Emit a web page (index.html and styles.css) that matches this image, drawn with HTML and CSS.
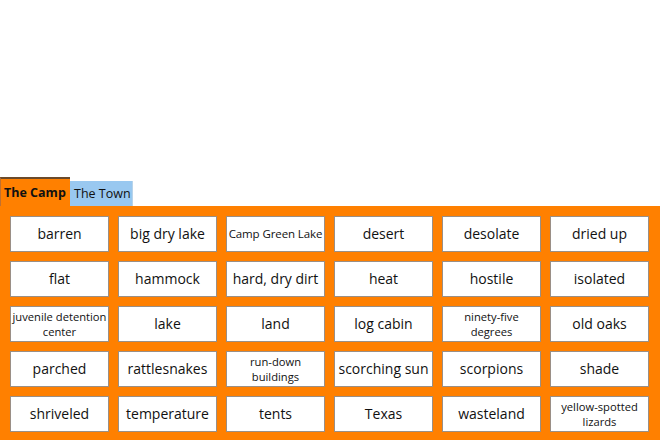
FILE: index.html
```html
<!DOCTYPE html>
<html lang="en">
<head>
  <meta charset="UTF-8">
  <title>Holes vocabulary</title>
  <link rel="stylesheet" href="styles.css">
</head>
<body>
  <div class="board">
    <div class="tabs">
      <div class="tab active">The Camp</div>
      <div class="tab">The Town</div>
    </div>
    <div class="panel">
      <div class="word">barren</div>
      <div class="word">big dry lake</div>
      <div class="word mid">Camp Green Lake</div>
      <div class="word">desert</div>
      <div class="word">desolate</div>
      <div class="word">dried up</div>

      <div class="word">flat</div>
      <div class="word">hammock</div>
      <div class="word">hard, dry dirt</div>
      <div class="word">heat</div>
      <div class="word">hostile</div>
      <div class="word">isolated</div>

      <div class="word small">juvenile detention center</div>
      <div class="word">lake</div>
      <div class="word">land</div>
      <div class="word">log cabin</div>
      <div class="word small">ninety-five degrees</div>
      <div class="word">old oaks</div>

      <div class="word">parched</div>
      <div class="word">rattlesnakes</div>
      <div class="word small">run-down buildings</div>
      <div class="word">scorching sun</div>
      <div class="word">scorpions</div>
      <div class="word">shade</div>

      <div class="word">shriveled</div>
      <div class="word">temperature</div>
      <div class="word">tents</div>
      <div class="word">Texas</div>
      <div class="word">wasteland</div>
      <div class="word small">yellow-spotted lizards</div>
    </div>
  </div>
</body>
</html>
```

FILE: styles.css
```css
body {
  margin: 0;
  background: #fff;
  font-family: 'Open Sans', 'Noto Sans', sans-serif;
  color: #111;
}
.board {
  padding-top: 177px;
}
.tabs {
  display: flex;
  align-items: flex-end;
  height: 29px;
}
.tab {
  box-sizing: border-box;
  font-size: 12.5px;
  padding: 0 4px;
  white-space: nowrap;
}
.tab.active {
  width: 70px;
  height: 29px;
  line-height: 28px;
  background: #ff8000;
  border-top: 2px solid #6b4a2a;
  border-left: 1px solid #c07030;
  font-weight: bold;
  padding-left: 3px;
}
.tab:not(.active) {
  width: 63px;
  height: 25px;
  line-height: 26px;
  background: #99c8f0;
  border-right: 1px solid #b8d4ea;
  padding-left: 4px;
}
.panel {
  background: #ff8000;
  height: 234px;
  box-sizing: border-box;
  padding: 10px 11px 9px 10px;
  display: grid;
  grid-template-columns: repeat(6, 99px);
  grid-auto-rows: 36px;
  column-gap: 9px;
  row-gap: 9px;
}
.word {
  box-sizing: border-box;
  background: #fff;
  border: 1px solid #9a8f86;
  display: flex;
  align-items: center;
  justify-content: center;
  text-align: center;
  font-size: 14px;
  line-height: 16px;
  padding: 0 1px;
}
.word.mid {
  font-size: 11.5px;
  letter-spacing: -0.1px;
  white-space: nowrap;
}
.word.small {
  font-size: 11.2px;
  line-height: 15px;
}
```
